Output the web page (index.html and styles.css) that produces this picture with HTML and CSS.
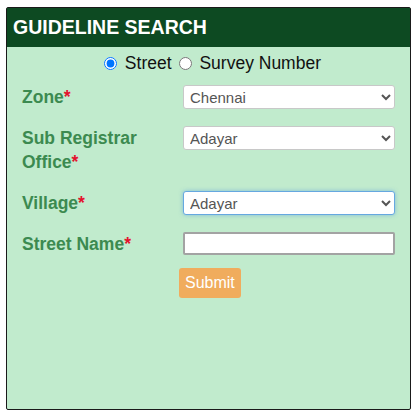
FILE: index.html
```html
<!DOCTYPE html>
<html lang="en">
  <head>
    <meta charset="UTF-8" />
    <meta name="viewport" content="width=device-width, initial-scale=1.0" />
    <title>Guideline Search</title>
    <link rel="stylesheet" href="styles.css">
  </head>
  <body>
    <div class="search-panel">
      <div class="panel-title">GUIDELINE SEARCH</div>
      <form class="search-form" onsubmit="return false">
        <div class="search-type">
          <label><input type="radio" name="type" value="street" checked /> Street</label>
          <label><input type="radio" name="type" value="survey" /> Survey Number</label>
        </div>

        <div class="form-grid">
          <label class="field-label">Zone<span class="req">*</span></label>
          <select class="field-select">
            <option>Chennai</option>
          </select>

          <label class="field-label">Sub Registrar Office<span class="req">*</span></label>
          <select class="field-select">
            <option>Adayar</option>
          </select>

          <label class="field-label">Village<span class="req">*</span></label>
          <select class="field-select focused">
            <option>Adayar</option>
          </select>

          <label class="field-label">Street Name<span class="req">*</span></label>
          <input type="text" class="field-input" />

          <div></div>
          <div><button type="submit" class="submit-btn">Submit</button></div>
        </div>
      </form>
    </div>
  </body>
</html>
```

FILE: styles.css
```css
/* Global Styles */
body {
  margin: 0;
  font-family: "Liberation Sans", Arial, sans-serif;
  background: #fff;
}

/* Panel */
.search-panel {
  margin: 7px 6px 0 6px;
  height: 403px;
  border: 1px solid #1a1a1a;
  border-radius: 2px;
  background: #c1ebcd;
  box-sizing: border-box;
}

.panel-title {
  background: #0d4a22;
  color: #fff;
  font-weight: bold;
  font-size: 19.5px;
  height: 39px;
  line-height: 39px;
  padding-left: 6px;
}

/* Radio row */
.search-type {
  display: flex;
  justify-content: center;
  gap: 7px;
  padding: 4px 0 0 8px;
  font-size: 17.5px;
  color: #111;
  height: 24px;
  line-height: 24px;
}

.search-type input {
  margin: 0 3px 0 0;
  vertical-align: -1px;
}

/* Form rows */
.form-grid {
  display: grid;
  grid-template-columns: 161px 212px;
  row-gap: 17px;
  padding: 10px 15px 0 15px;
}

.field-label {
  font-size: 17.5px;
  font-weight: bold;
  line-height: 24px;
  color: #3c8a50;
  padding-right: 30px;
}

.req {
  color: #e3132d;
}

.field-select,
.field-input {
  height: 24px;
  width: 212px;
  box-sizing: border-box;
  font-family: "Liberation Sans", Arial, sans-serif;
  font-size: 15px;
  color: #555;
  background: #fff;
  border: 1px solid #c8c8c8;
  border-radius: 3px;
  padding: 0 2px;
}

.field-select.focused {
  border-color: #66a8e0;
  box-shadow: 0 0 4px rgba(102, 168, 224, 0.7);
}

.field-input {
  border: 2px solid #a3a3a3;
  border-radius: 2px;
  height: 23px;
}

/* Submit */
.submit-btn {
  margin: -5px 0 0 -4px;
  background: #f0ac5d;
  color: #fff;
  border: none;
  border-radius: 3px;
  font-family: "Liberation Sans", Arial, sans-serif;
  font-size: 16px;
  height: 30px;
  padding: 0 6px;
  cursor: pointer;
}
```
